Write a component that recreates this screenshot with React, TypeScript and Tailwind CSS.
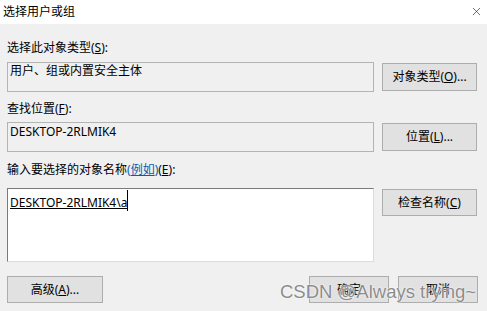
import { X } from 'lucide-react';

const font = 'font-["Noto_Sans","Noto_Sans_CJK_SC",sans-serif]';

function Btn({ children, className = '' }: { children: React.ReactNode; className?: string }) {
  return (
    <div className={`flex items-center justify-center border border-[#adadad] bg-[#e1e1e1] text-[12px] leading-none text-black ${className}`}>
      {children}
    </div>
  );
}

export default function App() {
  return (
    <div className={`relative h-[311px] w-[487px] overflow-hidden bg-[#f0f0f0] text-[12px] text-black ${font}`}>
      <div className="flex h-[24px] items-center justify-between bg-white pl-[3px] pr-[4px]">
        <span className="leading-[16px]">选择用户或组</span>
        <X size={13} strokeWidth={1.2} className="mb-[1px] text-[#222]" />
      </div>

      <div className="px-[7px] pt-[16px]">
        <div className="h-[16px] leading-[16px]">选择此对象类型(<u>S</u>):</div>
        <div className="mt-[6px] flex gap-[8px]">
          <div className="h-[30px] w-[367px] border border-[#b4b4b4] px-[2px] leading-[16px]">用户、组或内置安全主体</div>
          <Btn className="mt-[1px] h-[28px] w-[95px]">对象类型(<u>O</u>)...</Btn>
        </div>

        <div className="mt-[9px] h-[16px] leading-[16px]">查找位置(<u>F</u>):</div>
        <div className="mt-[5px] flex gap-[8px]">
          <div className="h-[30px] w-[367px] border border-[#b4b4b4] px-[2px] pt-[1px] leading-[16px]">DESKTOP-2RLMIK4</div>
          <Btn className="mt-[1px] h-[28px] w-[95px]">位置(<u>L</u>)...</Btn>
        </div>

        <div className="mt-[10px] h-[16px] leading-[16px]">
          输入要选择的对象名称<span className="text-[#0b5cad]">(<u>例如</u>)</span>(<u>E</u>):
        </div>
        <div className="mt-[10px] flex gap-[8px]">
          <div className="h-[74px] w-[367px] border border-[#7a7a7a] border-b-[#dcdcdc] border-r-[#dcdcdc] bg-white px-[2px] pt-[1px]">
            <div className="flex items-center">
              <span className="mt-[4px] leading-[16px] underline">DESKTOP-2RLMIK4\a</span>
              <span className="h-[21px] w-[1px] bg-black" />
            </div>
          </div>
          <Btn className="mt-[1px] h-[27px] w-[95px]">检查名称(<u>C</u>)</Btn>
        </div>

        <div className="mt-[14px] flex items-start">
          <Btn className="h-[27px] w-[96px]">高级(<u>A</u>)...</Btn>
          <div className="ml-auto mr-[2px] flex gap-[9px]">
            <Btn className="h-[27px] w-[80px]">确定</Btn>
            <Btn className="h-[27px] w-[80px]">取消</Btn>
          </div>
        </div>
      </div>

      <div className='absolute left-[280px] top-[281px] font-["Liberation_Sans",sans-serif] text-[18.5px] leading-[22px] text-[#8c8c8c] [text-shadow:0_0_2px_#fff,0_0_1px_#fff]'>
        CSDN @Always trying~
      </div>
    </div>
  );
}
